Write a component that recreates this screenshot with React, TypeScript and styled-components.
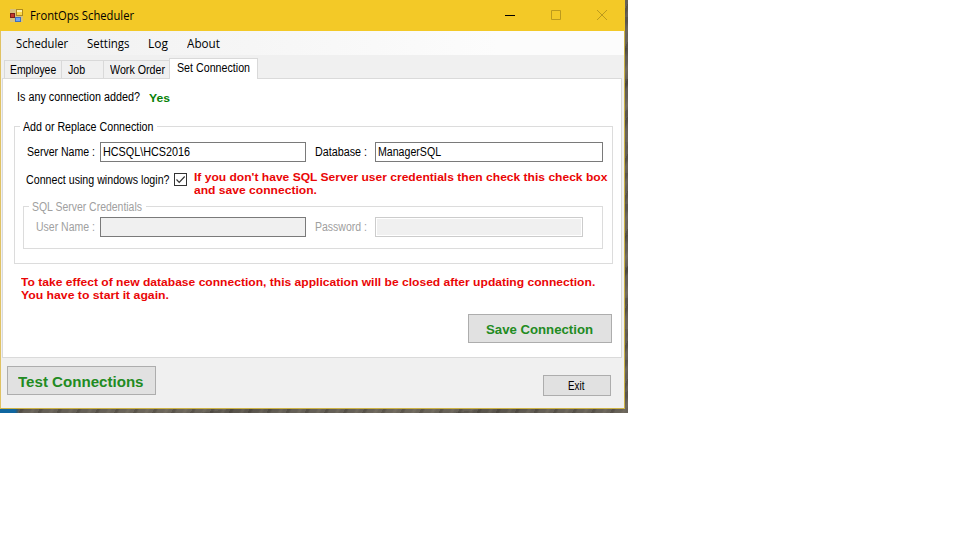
import React from 'react';
import styled, { createGlobalStyle, css } from 'styled-components';

const GlobalStyle = createGlobalStyle`
  * { box-sizing: border-box; }
  body { margin: 0; background: #fff; }
`;

const Desktop = styled.div`
  width: 628px;
  height: 413px;
  padding: 0 3px 4px 0;
  background:
    linear-gradient(90deg, #0f66a0 0 15px, #2f5a74 17px, transparent 19px) 0 409px / 628px 4px no-repeat,
    repeating-linear-gradient(117deg, rgba(30, 26, 20, .22) 0 2px, transparent 4px 9px, rgba(160, 150, 130, .16) 11px 12px, transparent 14px 17px),
    repeating-linear-gradient(173deg, rgba(25, 22, 18, .14) 0 5px, transparent 9px 17px, rgba(140, 130, 110, .15) 21px 26px, transparent 31px),
    #645f56;
`;

const Window = styled.main`
  width: 625px;
  height: 409px;
  display: flex;
  flex-direction: column;
  border: 1px solid #cdb344;
  border-top: 0;
  border-left-color: #e0c263;
  background: #f0f0f0;
  color: #000;
  font: 12px/14px 'Liberation Sans', Arial, sans-serif;
`;

/* A single line whose glyphs are stretched or condensed to the bitmap face's proportions. */
const Text = styled.span<{ $w: number; $scale?: number }>`
  display: block;
  flex: none;
  width: ${(p) => p.$w}px;
  white-space: nowrap;
  transform: scaleX(${(p) => p.$scale ?? 0.885});
  transform-origin: 0 50%;
`;

const TitleBar = styled.header`
  height: 31px;
  flex: none;
  display: flex;
  align-items: center;
  padding: 0 17px 0 9px;
  margin: 0 -1px;
  background: #f3c927;
  font: 12px/16px 'Open Sans', 'Noto Sans', sans-serif;
  svg { display: block; }
`;

const AppIcon = styled.svg`
  margin: 0 7px 0 1px;
`;

const CaptionButtons = styled.div`
  display: flex;
  gap: 35px;
  margin-left: auto;
`;

const MenuBar = styled.nav`
  height: 24px;
  flex: none;
  display: flex;
  gap: 18px;
  padding: 5px 0 0 15px;
  background: linear-gradient(90deg, #f0f0f0, #fcfcfc 80%);
  font: 12px/16px 'Open Sans', 'Noto Sans', sans-serif;
`;

const TabStrip = styled.div`
  height: 23px;
  flex: none;
  display: flex;
  align-items: flex-end;
  padding-left: 3px;
`;

const Tab = styled.div<{ $w: number; $pad?: number; $active?: boolean }>`
  width: ${(p) => p.$w}px;
  height: 18px;
  padding: 2px 0 0 ${(p) => p.$pad ?? 6}px;
  border: 1px solid #d9d9d9;
  border-bottom: 0;
  border-right: 0;
  ${(p) =>
    p.$active &&
    css`
      height: 21px;
      margin-bottom: -1px;
      border-right: 1px solid #d9d9d9;
      background: #fff;
      z-index: 1;
    `}
`;

const TabPage = styled.section`
  width: 620px;
  height: 280px;
  flex: none;
  margin-left: 1px;
  border: 1px solid #dadada;
  background: #fff;
  display: flex;
  flex-direction: column;
  padding: 11px 8px 0 11px;
`;

const StatusLine = styled.div`
  display: flex;
  height: 14px;
  gap: 9px;
  padding-left: 3px;
`;

const Strong = styled.div<{ $color: string; $size?: number; $line?: number }>`
  color: ${(p) => p.$color};
  font-weight: bold;
  font-size: ${(p) => p.$size ?? 11}px;
  line-height: ${(p) => p.$line ?? 13}px;
`;

const Group = styled.fieldset<{ $nested?: boolean }>`
  margin: 0;
  padding: 0;
  min-width: 0;
  flex: none;
  border: 1px solid #dcdcdc;
  ${(p) =>
    p.$nested
      ? css`
          width: 580px;
          height: 49px;
          margin: 2px 0 0 8px;
          color: #a0a0a0;
        `
      : css`
          width: 599px;
          height: 144px;
          margin: 16px 0 0;
        `}
`;

const Legend = styled.legend`
  height: 13px;
  line-height: 14px;
  margin-left: 5px;
  padding: 0 3px;
`;

const FieldRow = styled.div<{ $top: number }>`
  display: flex;
  height: 20px;
  margin-top: ${(p) => p.$top}px;
  padding-left: 12px;
`;

const FieldLabel = styled.div<{ $w: number; $gap?: number }>`
  width: ${(p) => p.$w}px;
  margin-left: ${(p) => p.$gap ?? 0}px;
  flex: none;
  padding-top: 3px;
`;

const Input = styled.div<{ $w: number; $disabled?: boolean; $soft?: boolean }>`
  width: ${(p) => p.$w}px;
  height: 20px;
  flex: none;
  padding: 2px 0 0 2px;
  border: 1px solid ${(p) => (p.$soft ? '#cccccc' : '#7a7a7a')};
  background: ${(p) => (p.$disabled ? '#f0f0f0' : '#fff')};
  box-shadow: ${(p) => (p.$soft ? 'inset 0 0 0 1px #fff' : 'none')};
`;

const LoginRow = styled.div`
  display: flex;
  height: 27px;
  margin-top: 9px;
  padding-left: 11px;
`;

const LoginLabel = styled.div`
  padding-top: 2px;
`;

const CheckBox = styled.svg`
  margin: 2px 7px 0 4px;
  flex: none;
`;

const Notice = styled.div`
  margin: 12px 0 0 7px;
`;

const Button = styled.button<{ $w: number; $h: number; $pad: string }>`
  display: flex;
  align-items: flex-start;
  width: ${(p) => p.$w}px;
  height: ${(p) => p.$h}px;
  flex: none;
  margin: 0;
  padding: ${(p) => p.$pad};
  border: 1px solid #adadad;
  border-radius: 0;
  background: #e1e1e1;
  color: #000;
  font: inherit;
  text-align: left;
`;

const SaveRow = styled.div`
  display: flex;
  justify-content: flex-end;
  margin: 12px 1px 0 0;
`;

const Footer = styled.footer`
  flex: 1;
  display: flex;
  justify-content: space-between;
  padding: 8px 13px 0 6px;
`;

const ExitSlot = styled.div`
  padding-top: 9px;
`;

const menu: [string, number, number][] = [
  ['Scheduler', 53, 0.935],
  ['Settings', 43, 0.955],
  ['Log', 21, 1],
  ['About', 33, 0.976],
];

const RED = '#ea0606';
const GREEN = '#228b22';

export default function App() {
  return (
    <>
      <GlobalStyle />
      <Desktop>
        <Window>
          <TitleBar>
            <AppIcon width="13" height="13" viewBox="0 0 13 13">
              <rect width="13" height="13" fill="#d8c17a" />
              <rect x="6.5" y="0.5" width="6" height="6" fill="#fbd84c" stroke="#b08a1c" />
              <path d="M7 1.5h5M7 2.5h5" stroke="#fff0a8" />
              <rect x="0.5" y="4.5" width="4" height="4" fill="#c4382c" stroke="#7c2018" />
              <rect x="5.5" y="8.5" width="5" height="4" fill="#6fa4ee" stroke="#3e6fc0" />
            </AppIcon>
            <Text $w={104} $scale={0.935}>FrontOps Scheduler</Text>
            <CaptionButtons>
              <svg width="11" height="11"><path d="M0 5.5h10" stroke="#000" /></svg>
              <svg width="11" height="11"><path d="M.5 .5h9v9h-9z" fill="none" stroke="#bc9a1d" /></svg>
              <svg width="11" height="11"><path d="M0 0l10 10M10 0l-10 10" stroke="#bc9a1d" /></svg>
            </CaptionButtons>
          </TitleBar>
          <MenuBar>
            {menu.map(([label, w, s]) => (
              <Text key={label} $w={w} $scale={s}>{label}</Text>
            ))}
          </MenuBar>
          <TabStrip>
            <Tab $w={57} $pad={5}><Text $w={46} $scale={0.865}>Employee</Text></Tab>
            <Tab $w={42}><Text $w={17}>Job</Text></Tab>
            <Tab $w={66}><Text $w={55} $scale={0.89}>Work Order</Text></Tab>
            <Tab $w={89} $pad={7} $active><Text $w={73} $scale={0.89}>Set Connection</Text></Tab>
          </TabStrip>
          <TabPage>
            <StatusLine>
              <Text $w={123} $scale={0.899}>Is any connection added?</Text>
              <Strong $color="#078207" $line={16}><Text $w={21} $scale={1.107}>Yes</Text></Strong>
            </StatusLine>
            <Group>
              <Legend><Text $w={131} $scale={0.889}>Add or Replace Connection</Text></Legend>
              <FieldRow $top={9}>
                <FieldLabel $w={73}><Text $w={68} $scale={0.879}>Server Name :</Text></FieldLabel>
                <Input $w={206}><Text $w={87} $scale={0.9}>HCSQL\HCS2016</Text></Input>
                <FieldLabel $w={60} $gap={9}><Text $w={52} $scale={0.896}>Database :</Text></FieldLabel>
                <Input $w={228}><Text $w={63} $scale={0.883}>ManagerSQL</Text></Input>
              </FieldRow>
              <LoginRow>
                <LoginLabel><Text $w={144} $scale={0.889}>Connect using windows login?</Text></LoginLabel>
                <CheckBox width="13" height="13">
                  <rect x=".5" y=".5" width="12" height="12" fill="#fff" stroke="#333" />
                  <path d="M2.5 6.5l2.7 2.8 5.5-5.8" fill="none" stroke="#333" strokeWidth="1.2" />
                </CheckBox>
                <Strong $color={RED}>
                  <Text $w={400} $scale={1.096}>If you don't have SQL Server user credentials then check this check box</Text>
                  <Text $w={123} $scale={1.099}>and save connection.</Text>
                </Strong>
              </LoginRow>
              <Group $nested>
                <Legend><Text $w={111} $scale={0.871}>SQL Server Credentials</Text></Legend>
                <FieldRow $top={4}>
                  <FieldLabel $w={64}><Text $w={59} $scale={0.876}>User Name :</Text></FieldLabel>
                  <Input $w={206} $disabled />
                  <FieldLabel $w={60} $gap={9}><Text $w={52} $scale={0.876}>Password :</Text></FieldLabel>
                  <Input $w={208} $disabled $soft />
                </FieldRow>
              </Group>
            </Group>
            <Notice>
              <Strong $color={RED}>
                <Text $w={574} $scale={1.098}>To take effect of new database connection, this application will be closed after updating connection.</Text>
                <Text $w={148} $scale={1.112}>You have to start it again.</Text>
              </Strong>
            </Notice>
            <SaveRow>
              <Button $w={144} $h={29} $pad="8px 0 0 17px">
                <Strong $color={GREEN} $size={12} $line={14}><Text $w={107} $scale={1.099}>Save Connection</Text></Strong>
              </Button>
            </SaveRow>
          </TabPage>
          <Footer>
            <Button $w={149} $h={29} $pad="7px 0 0 10px">
              <Strong $color={GREEN} $size={14} $line={16}><Text $w={126} $scale={1.078}>Test Connections</Text></Strong>
            </Button>
            <ExitSlot>
              <Button $w={68} $h={21} $pad="3px 0 0 24px"><Text $w={17} $scale={0.82}>Exit</Text></Button>
            </ExitSlot>
          </Footer>
        </Window>
      </Desktop>
    </>
  );
}
